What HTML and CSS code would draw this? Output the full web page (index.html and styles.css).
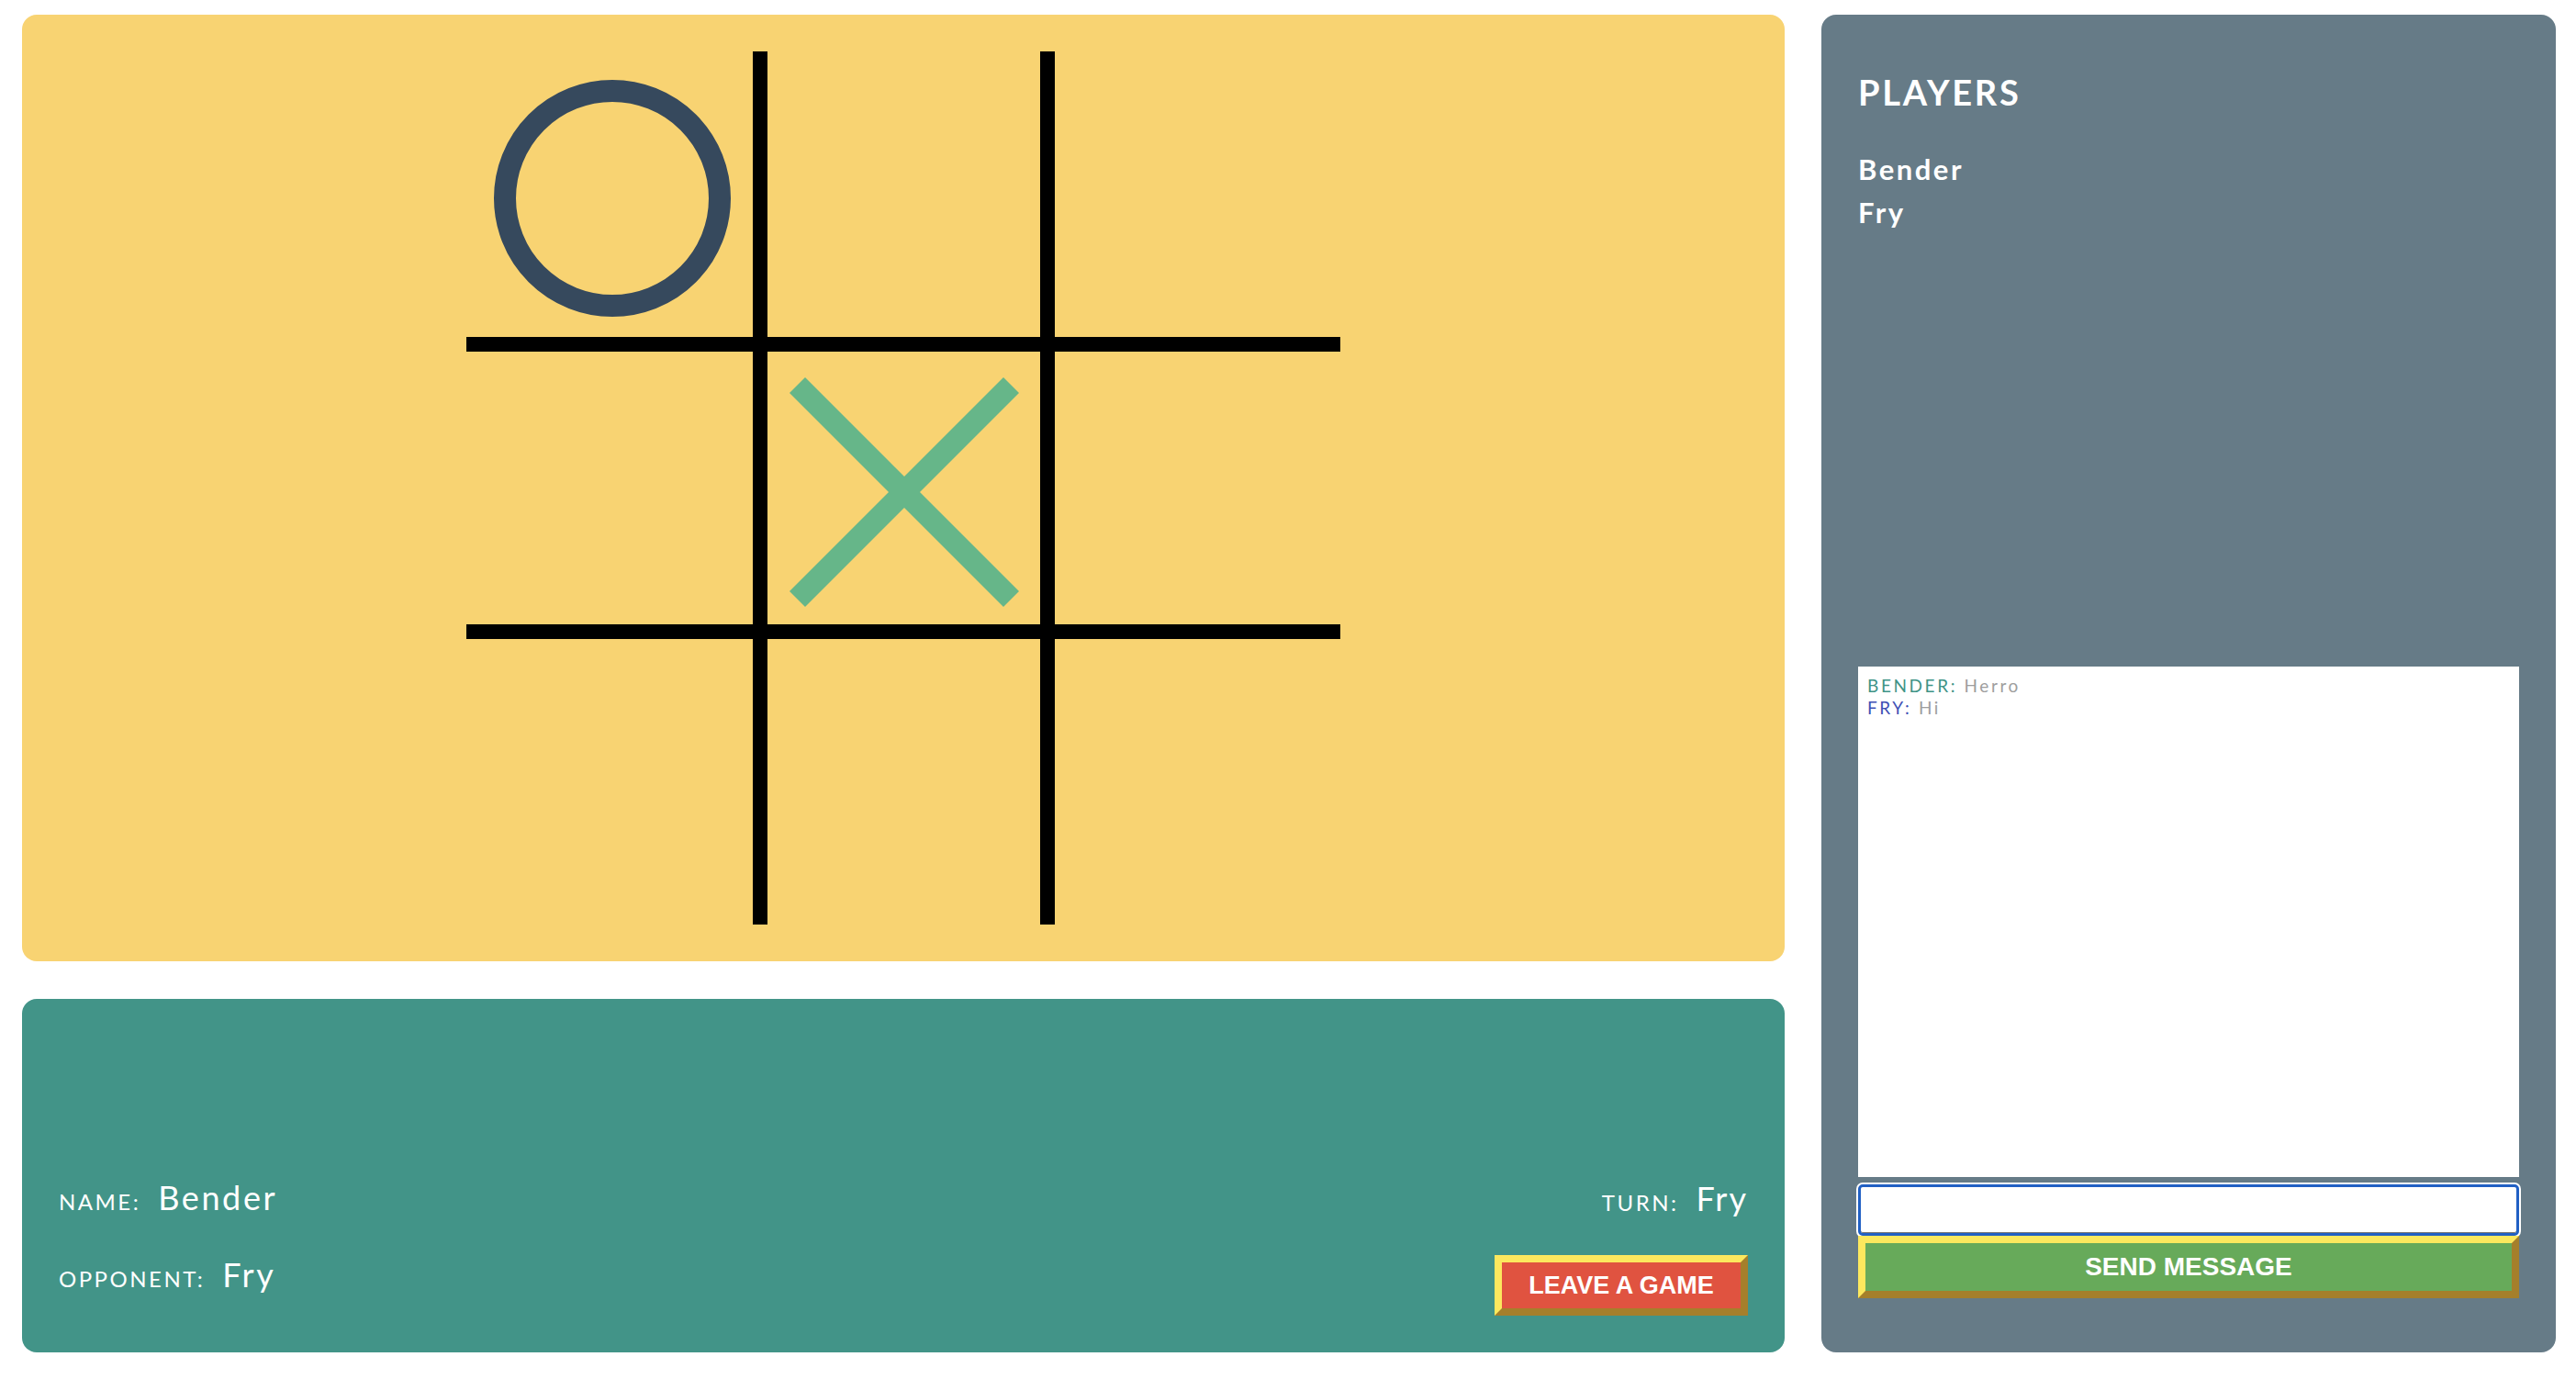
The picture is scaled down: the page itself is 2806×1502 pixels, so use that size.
FILE: index.html
```html
<!DOCTYPE html>
<html lang="en">
<head>
<meta charset="utf-8">
<title>Tic Tac Toe</title>
<link rel="stylesheet" href="styles.css">
</head>
<body>
<div class="app">
  <div class="main">
    <section class="board-panel">
      <div class="board">
        <div class="cell">
          <svg class="mark mark-o" width="258" height="258" viewBox="0 0 258 258"><circle cx="129" cy="129" r="117" fill="none" stroke="#36495d" stroke-width="24"/></svg>
        </div>
        <div class="cell"></div>
        <div class="cell"></div>
        <div class="cell"></div>
        <div class="cell">
          <svg class="mark mark-x" width="250" height="250" viewBox="0 0 250 250"><line x1="8.5" y1="8.5" x2="241.5" y2="241.5" stroke="#66b689" stroke-width="24"/><line x1="241.5" y1="8.5" x2="8.5" y2="241.5" stroke="#66b689" stroke-width="24"/></svg>
        </div>
        <div class="cell"></div>
        <div class="cell"></div>
        <div class="cell"></div>
        <div class="cell"></div>
      </div>
    </section>
    <section class="info-panel">
      <div class="info-left">
        <div class="info-row"><span class="label">NAME:</span><span class="value">Bender</span></div>
        <div class="info-row"><span class="label">OPPONENT:</span><span class="value">Fry</span></div>
      </div>
      <div class="info-right">
        <div class="info-row"><span class="label">TURN:</span><span class="value">Fry</span></div>
        <button class="btn btn-leave" type="button">LEAVE A GAME</button>
      </div>
    </section>
  </div>
  <aside class="side-panel">
    <h2 class="players-title">PLAYERS</h2>
    <ul class="players-list">
      <li>Bender</li>
      <li>Fry</li>
    </ul>
    <div class="chat-log">
      <div class="msg"><span class="author author-bender">BENDER:</span> <span class="msg-text">Herro</span></div>
      <div class="msg"><span class="author author-fry">FRY:</span> <span class="msg-text">Hi</span></div>
    </div>
    <input class="chat-input" type="text" aria-label="Message">
    <button class="btn btn-send" type="button">SEND MESSAGE</button>
  </aside>
</div>
</body>
</html>
```

FILE: styles.css
```css
* { box-sizing: border-box; }

html, body {
  margin: 0;
  padding: 0;
  background: #ffffff;
}

body {
  font-family: Lato, "Open Sans", "DejaVu Sans", sans-serif;
  color: #ffffff;
}

.app {
  display: flex;
  gap: 40px;
  padding: 16px 22px 29px 24px;
  height: 1502px;
}

.main {
  width: 1920px;
  display: flex;
  flex-direction: column;
  gap: 41px;
}

.board-panel {
  height: 1031px;
  background: #f8d372;
  border-radius: 16px;
  display: flex;
  align-items: center;
  justify-content: center;
}

.board {
  display: grid;
  grid-template-columns: 312px 297px 311px;
  grid-template-rows: 311px 297px 311px;
  gap: 16px;
  background: #000000;
}

.cell {
  background: #f8d372;
  display: flex;
  align-items: center;
  justify-content: center;
}

.mark { display: block; }
.mark-o { margin: 8px 0 0 6px; }
.mark-x { margin-top: 8px; }

.info-panel {
  height: 385px;
  background: #429488;
  border-radius: 16px;
  padding: 40px;
  display: flex;
  justify-content: space-between;
  align-items: flex-end;
}

.info-left {
  display: flex;
  flex-direction: column;
  gap: 24px;
  padding-bottom: 15px;
}

.info-right {
  display: flex;
  flex-direction: column;
  align-items: flex-end;
  gap: 32px;
}

.info-row {
  height: 60px;
  line-height: 60px;
  white-space: nowrap;
}

.label {
  font-size: 24px;
  letter-spacing: 2.5px;
  margin-right: 19px;
}

.value {
  font-size: 36px;
  letter-spacing: 2.6px;
}

.info-right .value {
  letter-spacing: 2px;
}

.btn {
  font-family: "Liberation Sans", Arial, sans-serif;
  font-weight: bold;
  color: #ffffff;
  border-style: solid;
  border-width: 8px;
  border-color: #fce85e #a57f2b #a57f2b #fce85e;
  padding: 0;
  margin: 0;
  cursor: pointer;
}

.btn-leave {
  width: 276px;
  height: 66px;
  background: #e05340;
  font-size: 27px;
}

.side-panel {
  width: 800px;
  background: #667b87;
  border-radius: 16px;
  padding: 62px 40px 59px;
  display: flex;
  flex-direction: column;
}

.players-title {
  margin: 0;
  font-size: 38px;
  line-height: 45.6px;
  font-weight: 700;
  letter-spacing: 2.7px;
}

.players-list {
  list-style: none;
  margin: 37px 0 0;
  padding: 0;
  font-size: 31px;
  line-height: 47px;
  font-weight: 700;
  letter-spacing: 2.5px;
}

.chat-log {
  margin-top: auto;
  height: 556px;
  background: #ffffff;
  padding: 9px 10px;
  font-size: 19px;
  line-height: 24px;
  letter-spacing: 2.6px;
}

.author-bender { color: #3f9487; }
.author-fry { color: #3f51b5; }
.msg-text { color: #9e9e9e; }

.chat-input {
  margin: 8px 0 0;
  width: 720px;
  height: 56px;
  border: 3px solid #2160c4;
  border-radius: 5px;
  background: #ffffff;
  box-shadow: inset 0 -1px 0 #777777, 0 0 0 2px #ffffff;
  outline: none;
  font-size: 20px;
  padding: 0 10px;
}

.btn-send {
  width: 720px;
  height: 68px;
  background: #67aa5a;
  font-size: 28px;
}
```
